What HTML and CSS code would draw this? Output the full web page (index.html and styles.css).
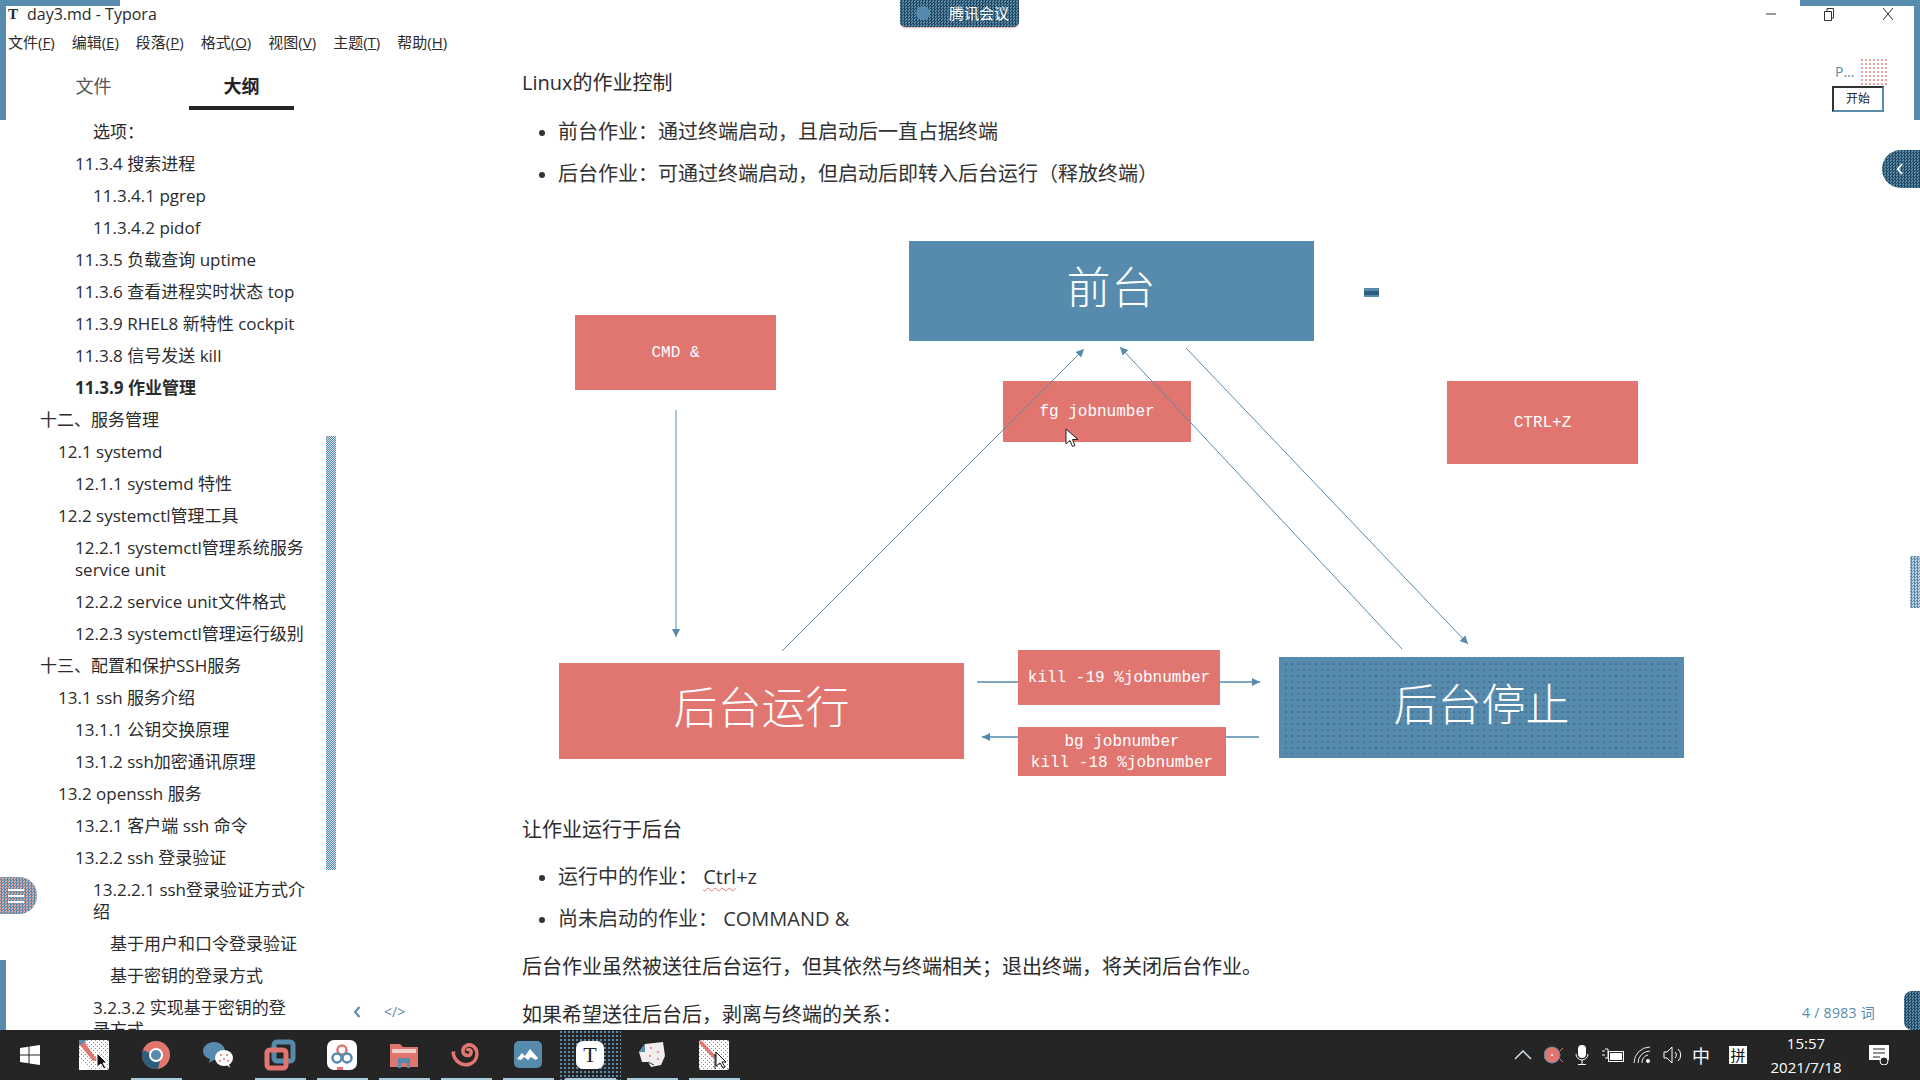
FILE: index.html
```html
<!DOCTYPE html>
<html lang="zh-CN">
<head>
    <meta charset="UTF-8">
    <title>day3.md - Typora</title>
    <link rel="stylesheet" href="styles.css">
</head>
<body>
    <div class="titlebar">
        <span class="app-icon">T</span>
        <span class="app-title">day3.md - Typora</span>
        <div class="window-buttons">
            <svg width="12" height="12" viewBox="0 0 12 12"><path d="M1 6h10" stroke="#333" fill="none"/></svg>
            <svg width="14" height="16" viewBox="0 0 14 16"><path d="M2.500 5.500h7v9h-7zM5 5V2.500h6.500V12H10" stroke="#333" fill="none"/></svg>
            <svg width="14" height="14" viewBox="0 0 14 14"><path d="M2 1l10 12M12 1L2 13" stroke="#333" fill="none"/></svg>
        </div>
    </div>

    <div class="menubar">
        <span>文件(<u>F</u>)</span>
        <span>编辑(<u>E</u>)</span>
        <span>段落(<u>P</u>)</span>
        <span>格式(<u>O</u>)</span>
        <span>视图(<u>V</u>)</span>
        <span>主题(<u>T</u>)</span>
        <span>帮助(<u>H</u>)</span>
    </div>

    <div class="workspace">
        <aside class="sidebar">
            <div class="tabs">
                <div class="tab">文件</div>
                <div class="tab active">大纲</div>
            </div>
            <ul class="outline">
                <li class="lv4">选项：</li>
                <li class="lv3">11.3.4 搜索进程</li>
                <li class="lv4">11.3.4.1 pgrep</li>
                <li class="lv4">11.3.4.2 pidof</li>
                <li class="lv3">11.3.5 负载查询 uptime</li>
                <li class="lv3">11.3.6 查看进程实时状态 top</li>
                <li class="lv3">11.3.9 RHEL8 新特性 cockpit</li>
                <li class="lv3">11.3.8 信号发送 kill</li>
                <li class="lv3 current">11.3.9 作业管理</li>
                <li class="lv1">十二、服务管理</li>
                <li class="lv2">12.1 systemd</li>
                <li class="lv3">12.1.1 systemd 特性</li>
                <li class="lv2">12.2 systemctl管理工具</li>
                <li class="lv3">12.2.1 systemctl管理系统服务 service unit</li>
                <li class="lv3">12.2.2 service unit文件格式</li>
                <li class="lv3">12.2.3 systemctl管理运行级别</li>
                <li class="lv1">十三、配置和保护SSH服务</li>
                <li class="lv2">13.1 ssh 服务介绍</li>
                <li class="lv3">13.1.1 公钥交换原理</li>
                <li class="lv3">13.1.2 ssh加密通讯原理</li>
                <li class="lv2">13.2 openssh 服务</li>
                <li class="lv3">13.2.1 客户端 ssh 命令</li>
                <li class="lv3">13.2.2 ssh 登录验证</li>
                <li class="lv4">13.2.2.1 ssh登录验证方式介绍</li>
                <li class="lv5">基于用户和口令登录验证</li>
                <li class="lv5">基于密钥的登录方式</li>
                <li class="lv4">3.2.3.2 实现基于密钥的登<br>录方式</li>
            </ul>
            <div class="outline-scroll"></div>
            <div class="sidebar-tools">
                <svg width="10" height="14" viewBox="0 0 10 14"><path d="M7.500 2L3 7l4.500 5" stroke="#568bae" stroke-width="2" fill="none"/></svg>
                <span>&lt;/&gt;</span>
            </div>
        </aside>

        <main class="content">
            <p class="first">Linux的作业控制</p>
            <ul class="bullets">
                <li>前台作业：通过终端启动，且启动后一直占据终端</li>
                <li>后台作业：可通过终端启动，但启动后即转入后台运行（释放终端）</li>
            </ul>

            <div class="diagram">
                <svg class="arrows" width="1170" height="590" viewBox="0 0 1170 590">
                    <defs>
                        <marker id="tip" markerWidth="9" markerHeight="9" refX="8" refY="4" orient="auto" markerUnits="userSpaceOnUse">
                            <path d="M0 0L8 4L0 8z" fill="#568bae"/>
                        </marker>
                    </defs>
                    <g stroke="#568bae" fill="none">
                        <path d="M154 210V437" marker-end="url(#tip)"/>
                        <path d="M260 451L562 149" marker-end="url(#tip)"/>
                        <path d="M880 449L598 147" marker-end="url(#tip)"/>
                        <path d="M664 148L946 444" marker-end="url(#tip)"/>
                        <path d="M455 482H496M698 482H738" stroke-width="1.500" marker-end="url(#tip)"/>
                        <path d="M737 537H704M496 537H460" stroke-width="1.500" marker-end="url(#tip)"/>
                    </g>
                </svg>
                <div class="node blue node-front big">前台</div>
                <div class="node red node-cmd">CMD &amp;</div>
                <div class="node red node-fg">fg jobnumber</div>
                <div class="node red node-ctrl">CTRL+Z</div>
                <div class="node red node-run big">后台运行</div>
                <div class="node red node-kill">kill -19 %jobnumber</div>
                <div class="node red node-bg">bg jobnumber<br>kill -18 %jobnumber</div>
                <div class="node blue node-stop big"><span>后台停止</span></div>
                <div class="mini-tag"></div>
                <svg class="cursor" width="14" height="20" viewBox="0 0 14 20"><path d="M1 1v15l4-3.500 2.500 6 2.500-1-2.500-6H13z" fill="#fff" stroke="#222"/></svg>
            </div>

            <p>让作业运行于后台</p>
            <ul class="bullets">
                <li>运行中的作业： <span class="typo">Ctrl</span>+z</li>
                <li>尚未启动的作业： COMMAND &amp;</li>
            </ul>
            <p class="tight">后台作业虽然被送往后台运行，但其依然与终端相关；退出终端，将关闭后台作业。</p>
            <p class="tight">如果希望送往后台后，剥离与终端的关系：</p>
        </main>
    </div>

    <div class="taskbar">
        <svg class="start" width="20" height="20" viewBox="0 0 20 20"><path d="M0 3l8.500-1.200V9.500H0zM9.500 1.600L20 0v9.500H9.500zM0 10.500h8.500v7.700L0 17zM9.500 10.500H20V20L9.500 18.400z" fill="#fff"/></svg>

        <div class="slot">
            <svg width="30" height="30" viewBox="0 0 30 30">
                <defs>
                    <pattern id="speckle" width="4" height="4" patternUnits="userSpaceOnUse">
                        <rect width="4" height="4" fill="#fff"/>
                        <rect width="1" height="1" fill="#e17671"/>
                        <rect x="2" y="2" width="1" height="1" fill="#568bae"/>
                    </pattern>
                </defs>
                <rect width="30" height="30" rx="2" fill="url(#speckle)"/>
                <path d="M0 18L12 30H0z" fill="#fff"/>
                <path d="M4 0l12 17 4 3-6 1L0 4z" fill="#e17671"/>
                <path d="M0 0h8L0 6z" fill="#568bae"/>
                <path d="M18 13v14l4-3 3 5 2-1-3-5h4z" fill="#111" stroke="#fff"/>
            </svg>
        </div>
        <div class="slot on">
            <svg width="30" height="30" viewBox="0 0 30 30"><circle cx="15" cy="15" r="14" fill="#e17671"/><path d="M2 10a14 14 0 0 0 15 19l3-12-9-3z" fill="#2f5d7c"/><circle cx="15" cy="15" r="7" fill="#fff"/><circle cx="15" cy="15" r="5" fill="#568bae"/></svg>
        </div>
        <div class="slot">
            <svg width="32" height="28" viewBox="0 0 32 28"><path d="M12 1c6 0 11 4 11 9s-5 9-11 9l-5 3 1-4c-4-1-7-4-7-8 0-5 5-9 11-9z" fill="#568bae"/><ellipse cx="22" cy="17" rx="9" ry="8" fill="#fff"/><path d="M25 24l3 3-1-4z" fill="#fff"/><g fill="#e17671"><circle cx="19" cy="14" r="1"/><circle cx="25" cy="14" r="1"/><circle cx="22" cy="18" r="1"/><circle cx="18" cy="20" r="1"/><circle cx="26" cy="20" r="1"/></g></svg>
        </div>
        <div class="slot on">
            <svg width="32" height="32" viewBox="0 0 32 32" fill="none" stroke-width="5"><rect x="10" y="3" width="19" height="19" rx="3" stroke="#568bae"/><rect x="3" y="11" width="19" height="18" rx="3" stroke="#e17671"/></svg>
        </div>
        <div class="slot on">
            <svg width="30" height="30" viewBox="0 0 30 30"><rect width="30" height="30" rx="7" fill="#fff"/><g fill="none" stroke-width="2.500"><circle cx="15" cy="10" r="4.500" stroke="#e17671"/><circle cx="10" cy="18" r="4.500" stroke="#568bae"/><circle cx="20" cy="18" r="4.500" stroke="#568bae"/></g><rect x="10" y="27" width="6" height="3" fill="#e17671"/></svg>
        </div>
        <div class="slot on">
            <svg width="30" height="28" viewBox="0 0 30 28"><path d="M1 3h10l3 3h15v20H1z" fill="#e17671"/><path d="M3 8h24v4H3z" fill="#f6cfcc"/><path d="M9 17h12v10h-3v-5h-6v5H9z" fill="#568bae"/></svg>
        </div>
        <div class="slot on">
            <svg width="30" height="28" viewBox="0 0 30 28" fill="none"><path d="M2 11c1 9 9 15 17 12 8-3 9-14 3-18-5-3-11 1-10 6 1 4 7 5 8 1 1-3-3-5-4-2" stroke="#e17671" stroke-width="3.500"/><path d="M1 10l4 1-3 3z" fill="#e17671"/></svg>
        </div>
        <div class="slot on">
            <svg width="28" height="28" viewBox="0 0 28 28"><rect width="28" height="27" rx="5" fill="#568bae"/><path d="M3 18l5-6 3 3 5-7 8 9-2 2-5-3-3 3-4-3-3 3z" fill="#fff"/></svg>
        </div>
        <div class="slot on active">
            <div class="typora-icon">T</div>
        </div>
        <div class="slot on">
            <svg width="28" height="28" viewBox="0 0 28 28"><path d="M7 3l18-2 2 14-4 9-10 2-3-5H4L1 11z" fill="#f2eded"/><path d="M7 3L1 11h6z" fill="#568bae"/><path d="M10 21l6 3" stroke="#333"/><g fill="#e17671"><circle cx="13" cy="7" r="1"/><circle cx="20" cy="11" r="1"/><circle cx="12" cy="15" r="1"/><circle cx="20" cy="18" r="1"/></g></svg>
        </div>
        <div class="slot on">
            <svg width="30" height="30" viewBox="0 0 30 30"><rect width="30" height="30" rx="2" fill="url(#speckle)"/><path d="M2 0l12 13 4 3-4 2L0 3z" fill="#e17671"/><path d="M16 14v15M17 12v14l4-3 3 5 2-1-3-5h4z" fill="#fff" stroke="#111"/></svg>
        </div>

        <div class="tray">
            <svg width="18" height="10" viewBox="0 0 18 10"><path d="M1 9l8-8 8 8" stroke="#cfe0ea" stroke-width="1.500" fill="none"/></svg>
            <svg width="20" height="18" viewBox="0 0 20 18"><circle cx="8" cy="9" r="8" fill="#e17671" stroke="#568bae"/><path d="M16 5l3-3M16 13l3 3" stroke="#e17671"/><circle cx="8" cy="9" r="1" fill="#fff"/></svg>
            <svg width="14" height="20" viewBox="0 0 14 20"><rect x="3" y="0" width="8" height="13" rx="4" fill="#fff"/><path d="M1 9a6 6 0 0 0 12 0M7 15v4M3 19.500h8" stroke="#fff" fill="none"/></svg>
            <svg width="22" height="14" viewBox="0 0 22 14"><path d="M0 3h3M0 7h3M3 1h3v9H3" stroke="#fff" fill="none"/><rect x="6.500" y="3.500" width="15" height="10" fill="none" stroke="#fff"/><rect x="8" y="5" width="12" height="7" fill="#fff"/></svg>
            <svg width="20" height="18" viewBox="0 0 20 18" fill="none" stroke="#dfe8ee"><path d="M1 17A16 16 0 0 1 17 1M5 17A12 12 0 0 1 17 5M9 17a8 8 0 0 1 6-8"/><circle cx="15" cy="15" r="2" fill="#fff" stroke="none"/></svg>
            <svg width="20" height="18" viewBox="0 0 20 18" fill="none" stroke="#fff"><path d="M1 6h3l5-5v16l-5-5H1zM12 6a4 4 0 0 1 0 6M15 3a8 8 0 0 1 0 12"/></svg>
            <span class="ime">中</span>
            <span class="ime-box">拼</span>
            <div class="clock">
                <div>15:57</div>
                <div>2021/7/18</div>
            </div>
            <svg width="20" height="20" viewBox="0 0 20 20"><path d="M0 0h20v15H0z" fill="#fff"/><path d="M4 4h12M4 8h12M4 12h7" stroke="#252525"/><circle cx="15" cy="16" r="4" fill="#252525" stroke="#fff"/></svg>
        </div>
    </div>

    <!-- screen share frame and floating bits -->
    <div class="frame frame-tl-h"></div>
    <div class="frame frame-tl-v"></div>
    <div class="frame frame-tr-h"></div>
    <div class="frame frame-tr-v"></div>
    <div class="frame frame-bl-v"></div>

    <div class="meeting-tab"><i></i>腾讯会议</div>

    <div class="recorder">
        <div class="recorder-top"><span>P...</span><i></i></div>
        <div class="recorder-btn">开始</div>
    </div>

    <div class="handle-right">
        <svg width="8" height="12" viewBox="0 0 8 12"><path d="M6 1L2 6l4 5" stroke="#fff" stroke-width="2" fill="none"/></svg>
    </div>
    <div class="handle-left">
        <svg width="20" height="18" viewBox="0 0 20 18"><path d="M2 3h16M2 9h16M2 15h16" stroke="#fff" stroke-width="2"/></svg>
    </div>
    <div class="handle-low"></div>
    <div class="edge-scroll"></div>

    <div class="word-count">4 / 8983 词</div>
</body>
</html>
```

FILE: styles.css
```css
* {
    box-sizing: border-box;
}

html, body {
    margin: 0;
    height: 100%;
}

body {
    position: relative;
    width: 1920px;
    height: 1080px;
    overflow: hidden;
    display: flex;
    flex-direction: column;
    background: #fff;
    color: #2b2b2b;
    font-family: "Open Sans", "Noto Sans CJK SC", sans-serif;
}

/* title and menu */
.titlebar {
    height: 28px;
    flex: none;
    display: flex;
    align-items: center;
    padding-left: 8px;
    font-size: 16px;
}

.app-icon {
    width: 19px;
    font-family: "Liberation Serif", serif;
    font-weight: bold;
    font-size: 15px;
}

.window-buttons {
    margin-left: auto;
    padding-right: 25px;
    display: flex;
    gap: 45px;
    align-items: center;
}

.menubar {
    height: 28px;
    flex: none;
    display: flex;
    gap: 17px;
    padding-left: 8px;
    padding-bottom: 2px;
    align-items: center;
    font-size: 15px;
}

.workspace {
    height: 974px;
    flex: none;
    display: flex;
}

/* outline */
.sidebar {
    position: relative;
    width: 410px;
    flex: none;
    overflow: hidden;
}

.tabs {
    height: 54px;
    display: flex;
    gap: 43px;
    padding-left: 41px;
    font-size: 18px;
}

.tab {
    width: 105px;
    text-align: center;
    padding-top: 16px;
    color: #555;
}

.tab.active {
    color: #222;
    font-weight: bold;
    border-bottom: 4px solid #252525;
}

.outline {
    list-style: none;
    margin: 6px 0 0;
    padding: 0;
    width: 310px;
    font-size: 17px;
    line-height: 22px;
}

.outline li {
    padding-top: 5px;
    padding-bottom: 5px;
}

.lv1 { padding-left: 40px; }
.lv2 { padding-left: 58px; }
.lv3 { padding-left: 75px; }
.lv4 { padding-left: 93px; }
.lv5 { padding-left: 110px; }

.outline .current {
    font-weight: bold;
}

.outline-scroll {
    position: absolute;
    left: 326px;
    top: 380px;
    width: 10px;
    height: 434px;
    background: #8fa9bd repeating-conic-gradient(#568bae 0 25%, #d5dde3 0 50%) 0 0 / 2px 2px;
}

.sidebar-tools {
    position: absolute;
    left: 352px;
    top: 946px;
    display: flex;
    align-items: center;
    gap: 22px;
    font-size: 14px;
    color: #568bae;
}

/* document */
.content {
    flex: 1;
    padding-left: 112px;
    font-size: 20px;
    line-height: 28px;
}

.content p {
    margin: 0;
}

.content .first {
    padding-top: 13px;
    padding-bottom: 2px;
}

.content .tight {
    margin-top: 20px;
}

.bullets {
    margin: 19px 0 0;
    padding: 0 0 0 36px;
}

.bullets li {
    margin-top: 14px;
    color: #333;
}

.bullets li::marker {
    font-size: 18px;
}

.typo {
    text-decoration: underline wavy #e17671 1px;
    text-underline-offset: 3px;
}

.diagram {
    position: relative;
    height: 616px;
    margin-top: 12px;
    line-height: 21px;
}

.arrows {
    position: absolute;
    left: 0;
    top: 0;
    z-index: 2;
}

.node {
    position: absolute;
    display: flex;
    align-items: center;
    justify-content: center;
    padding-top: 2px;
    text-align: center;
    color: #fff;
    font-family: "Liberation Mono", "Noto Sans CJK SC", monospace;
    font-size: 16px;
}

.node.big {
    padding-top: 0;
    padding-bottom: 11px;
    font-family: "Noto Sans CJK SC", sans-serif;
    font-size: 44px;
    font-weight: 300;
}

.red { background: #e17671; }
.blue { background: #568bae; }

.node-front { left: 387px; top: 41px; width: 405px; height: 100px; font-size: 42px; letter-spacing: 1px; }
.node-cmd { left: 53px; top: 115px; width: 201px; height: 75px; }
.node-fg { left: 481px; top: 181px; width: 188px; height: 61px; }
.node-ctrl { left: 925px; top: 181px; width: 191px; height: 83px; }
.node-run { left: 37px; top: 463px; width: 405px; height: 96px; }
.node-kill { left: 496px; top: 450px; width: 202px; height: 55px; }
.node-bg { left: 496px; top: 527px; width: 208px; height: 49px; }
.node-stop { left: 757px; top: 457px; width: 405px; height: 101px; }

.node-stop::before {
    content: "";
    position: absolute;
    inset: 4px;
    background: radial-gradient(#1c3a4f 0.7px, transparent 1px) 0 0 / 6px 6px;
    opacity: 0.3;
}

.node-stop span {
    position: relative;
}

.mini-tag {
    position: absolute;
    left: 842px;
    top: 88px;
    width: 15px;
    height: 9px;
    background: #2f5d7c;
    border-top: 3px solid #568bae;
    border-bottom: 2px solid #568bae;
}

.cursor {
    position: absolute;
    left: 543px;
    top: 228px;
    z-index: 3;
}

/* taskbar */
.taskbar {
    position: absolute;
    left: 0;
    bottom: 0;
    width: 1920px;
    height: 50px;
    display: flex;
    align-items: center;
    background: #252525;
    z-index: 5;
}

.start {
    flex: none;
    margin-left: 20px;
    margin-right: 23px;
}

.slot {
    position: relative;
    width: 62px;
    height: 50px;
    display: flex;
    align-items: center;
    justify-content: center;
}

.slot.on::after {
    content: "";
    position: absolute;
    left: 6px;
    width: 51px;
    bottom: 0;
    height: 2px;
    background: #a9cbdc;
}

.slot.active {
    background: radial-gradient(#568bae 0.8px, transparent 1px) 0 0 / 4px 4px;
}

.typora-icon {
    width: 28px;
    height: 28px;
    background: #fff;
    border-radius: 7px;
    color: #222;
    text-align: center;
    font-family: "Liberation Serif", serif;
    font-size: 22px;
    line-height: 28px;
}

.tray {
    margin-left: auto;
    display: flex;
    align-items: center;
    color: #fff;
    position: relative;
    width: 406px;
    height: 50px;
    padding-left: 0;
}

.tray > * {
    position: absolute;
    top: 50%;
    transform: translate(-50%, -50%);
}

.tray > :nth-child(1) { left: 9px; }
.tray > :nth-child(2) { left: 40px; }
.tray > :nth-child(3) { left: 68px; }
.tray > :nth-child(4) { left: 99px; }
.tray > :nth-child(5) { left: 129px; }
.tray > :nth-child(6) { left: 159px; }
.tray > :nth-child(7) { left: 187px; }
.tray > :nth-child(8) { left: 224px; }
.tray > :nth-child(9) { left: 292px; }
.tray > :nth-child(10) { left: 365px; }

.ime {
    font-size: 18px;
}

.ime-box {
    width: 18px;
    height: 18px;
    background: #fff;
    color: #111;
    font-size: 15px;
    line-height: 18px;
    text-align: center;
}

.clock {
    text-align: center;
    font-size: 15px;
    line-height: 24px;
    white-space: nowrap;
}

/* overlays */
.frame {
    position: absolute;
    background: #568bae;
    z-index: 6;
}

.frame-tl-h { left: 0; top: 0; width: 120px; height: 6px; }
.frame-tl-v { left: 0; top: 0; width: 6px; height: 120px; }
.frame-tr-h { right: 0; top: 0; width: 120px; height: 6px; }
.frame-tr-v { right: 0; top: 0; width: 6px; height: 120px; }
.frame-bl-v { left: 0; top: 960px; width: 6px; height: 70px; }

.meeting-tab {
    position: absolute;
    left: 900px;
    top: 0;
    width: 119px;
    height: 27px;
    padding-left: 49px;
    border-radius: 0 0 5px 5px;
    background: repeating-conic-gradient(#26485f 0 25%, #568bae 0 50%) 0 0 / 3px 3px;
    box-shadow: 0 1px 1px #e9b3b0;
    color: #fff;
    font-size: 15px;
    line-height: 27px;
}

.meeting-tab i {
    position: absolute;
    left: 16px;
    top: 6px;
    width: 14px;
    height: 14px;
    border-radius: 50%;
    background: #568bae;
}

.recorder {
    position: absolute;
    left: 1832px;
    top: 57px;
    width: 56px;
}

.recorder-top {
    height: 29px;
    padding-left: 3px;
    display: flex;
    align-items: center;
    justify-content: space-between;
    font-size: 14px;
    color: #568bae;
}

.recorder-top i {
    width: 28px;
    height: 28px;
    background: radial-gradient(#e9a09c 0.7px, transparent 1px) 0 0 / 4px 4px;
}

.recorder-btn {
    width: 52px;
    height: 26px;
    border: 2px solid #333;
    border-right-color: #568bae;
    border-bottom-color: #568bae;
    background: #fff;
    color: #222;
    text-align: center;
    font-size: 12px;
    line-height: 22px;
}

.handle-right {
    position: absolute;
    left: 1882px;
    top: 150px;
    width: 38px;
    height: 38px;
    padding-left: 14px;
    display: flex;
    align-items: center;
    border-radius: 19px 0 0 19px;
    background: repeating-conic-gradient(#26485f 0 25%, #568bae 0 50%) 0 0 / 3px 3px;
}

.handle-left {
    position: absolute;
    left: 0;
    top: 877px;
    width: 37px;
    height: 37px;
    padding-left: 6px;
    display: flex;
    align-items: center;
    border-radius: 0 18px 18px 0;
    background: repeating-conic-gradient(#568bae 0 25%, #dfa5a3 0 50%) 0 0 / 3px 3px;
}

.handle-low {
    position: absolute;
    left: 1904px;
    top: 991px;
    width: 16px;
    height: 39px;
    border-radius: 8px 0 0 8px;
    background: repeating-conic-gradient(#26485f 0 25%, #568bae 0 50%) 0 0 / 3px 3px;
}

.edge-scroll {
    position: absolute;
    left: 1910px;
    top: 556px;
    width: 10px;
    height: 52px;
    background: repeating-conic-gradient(#568bae 0 25%, #c9d6df 0 50%) 0 0 / 3px 3px;
}

.word-count {
    position: absolute;
    left: 1802px;
    top: 1003px;
    font-size: 14px;
    letter-spacing: 0.3px;
    line-height: 20px;
    color: #568bae;
}
```
